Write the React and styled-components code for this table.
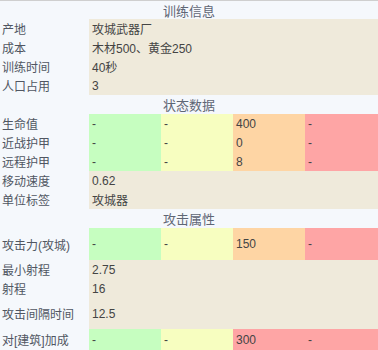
import React from "react";
import styled, { createGlobalStyle } from "styled-components";

const Global = createGlobalStyle`
  html, body { margin: 0; padding: 0; background: #f5f8fc; }
  body { font-family: "Liberation Sans", "Noto Sans CJK SC", sans-serif; }
`;

const Table = styled.div`
  width: 378px;
  border-top: 1px solid #cfcfcf;
  background: #f5f8fc;
  font-size: 12px;
  color: #444;
`;

const Header = styled.div`
  height: ${(p) => p.$h || 19}px;
  display: flex;
  align-items: center;
  justify-content: center;
  font-size: 13px;
  color: #5f6675;
  background: #f5f8fc;
`;

const Row = styled.div`
  display: grid;
  grid-template-columns: 89px 72px 72px 72px 1fr;
  height: ${(p) => p.$h || 19}px;
`;

const Label = styled.div`
  display: flex;
  align-items: center;
  padding-left: 2px;
  color: #505662;
  white-space: nowrap;
`;

const Value = styled.div`
  grid-column: 2 / 6;
  display: flex;
  align-items: center;
  padding-left: 3px;
  background: #efeadb;
  color: #444;
  white-space: nowrap;
`;

const palette = {
  green: "#c6fec0",
  yellow: "#f7fec0",
  orange: "#fed5a4",
  red: "#fea5a5",
};

const Cell = styled.div`
  display: flex;
  align-items: center;
  padding-left: 3px;
  background: ${(p) => palette[p.$c]};
  color: #444;
`;

const defaultOrder = ["green", "yellow", "orange", "red"];

function ColorRow({ label, values, h, colors = defaultOrder }) {
  return (
    <Row $h={h}>
      <Label>{label}</Label>
      {values.map((v, i) => (
        <Cell key={i} $c={colors[i]}>
          {v}
        </Cell>
      ))}
    </Row>
  );
}

function TextRow({ label, value, h }) {
  return (
    <Row $h={h}>
      <Label>{label}</Label>
      <Value>{value}</Value>
    </Row>
  );
}

export default function App() {
  return (
    <>
      <Global />
      <Table>
        <Header $h={18}>训练信息</Header>
        <TextRow label="产地" value="攻城武器厂" />
        <TextRow label="成本" value="木材500、黄金250" />
        <TextRow label="训练时间" value="40秒" />
        <TextRow label="人口占用" value="3" />
        <Header>状态数据</Header>
        <ColorRow label="生命值" values={["-", "-", "400", "-"]} />
        <ColorRow label="近战护甲" values={["-", "-", "0", "-"]} />
        <ColorRow label="远程护甲" values={["-", "-", "8", "-"]} />
        <TextRow label="移动速度" value="0.62" />
        <TextRow label="单位标签" value="攻城器" />
        <Header>攻击属性</Header>
        <ColorRow label="攻击力(攻城)" values={["-", "-", "150", "-"]} h={32} />
        <TextRow label="最小射程" value="2.75" />
        <TextRow label="射程" value="16" />
        <TextRow label="攻击间隔时间" value="12.5" h={31} />
        <ColorRow
          label="对[建筑]加成"
          values={["-", "-", "300", "-"]}
          colors={["green", "yellow", "red", "red"]}
          h={21}
        />
      </Table>
    </>
  );
}
